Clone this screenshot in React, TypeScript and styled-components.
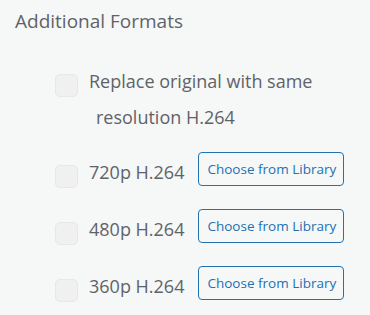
import React from "react";
import { styled, createGlobalStyle } from "styled-components";

const GlobalStyle = createGlobalStyle`
    html, body {
        margin: 0;
        padding: 0;
        background-color: #f6f7f7;
        font-family: "Open Sans", "Noto Sans", sans-serif;
    }
`;

const Panel = styled.div`
    width: 370px;
    height: 315px;
    box-sizing: border-box;
    padding: 9px 15px 0;
    background-color: #f6f7f7;
    color: #5f6368;
    overflow: hidden;
`;
const Heading = styled.h3`
    margin: 0;
    font-size: 19px;
    font-weight: 400;
    line-height: 25px;
`;
const Options = styled.div`
    display: flex;
    flex-direction: column;
    padding-left: 40px;
    margin-top: 29px;
`;
const Row = styled.div<{ $space: number }>`
    display: flex;
    align-items: flex-start;
    margin-top: ${(props) => props.$space}px;
`;
const Check = styled.span<{ $top: number }>`
    flex: none;
    width: 21px;
    height: 21px;
    margin-top: ${(props) => props.$top}px;
    margin-right: 11px;
    border: 1px solid #e6e7e8;
    border-radius: 5px;
    background-color: #f0f0f1;
`;
const Label = styled.span<{ $wrap?: boolean }>`
    font-size: 18px;
    line-height: 36px;
    margin-top: ${(props) => (props.$wrap ? 0 : 2)}px;
    padding-left: ${(props) => (props.$wrap ? 7 : 0)}px;
    text-indent: ${(props) => (props.$wrap ? -7 : 0)}px;
    width: ${(props) => (props.$wrap ? "250px" : "auto")};
    white-space: ${(props) => (props.$wrap ? "normal" : "nowrap")};
`;
const LibraryBtn = styled.button`
    margin-left: 14px;
    height: 34px;
    padding: 0 7px 0 8px;
    border: 1px solid #2271b1;
    border-radius: 4px;
    background-color: transparent;
    color: #2271b1;
    font-family: "Open Sans", "Noto Sans", sans-serif;
    font-size: 13.5px;
    white-space: nowrap;
    cursor: pointer;
`;

const formats = ["720p H.264", "480p H.264", "360p H.264"];

function App() {
    return (
        <>
            <GlobalStyle />
            <Panel>
                <Heading>Additional Formats</Heading>
                <Options>
                    <Row $space={0}>
                        <Check $top={11} />
                        <Label $wrap>Replace original with same resolution H.264</Label>
                    </Row>
                    {formats.map((name, i) => (
                        <Row key={name} $space={i === 0 ? 17 : 19}>
                            <Check $top={13} />
                            <Label>{name}</Label>
                            <LibraryBtn>Choose from Library</LibraryBtn>
                        </Row>
                    ))}
                </Options>
            </Panel>
        </>
    );
}

export default App;
